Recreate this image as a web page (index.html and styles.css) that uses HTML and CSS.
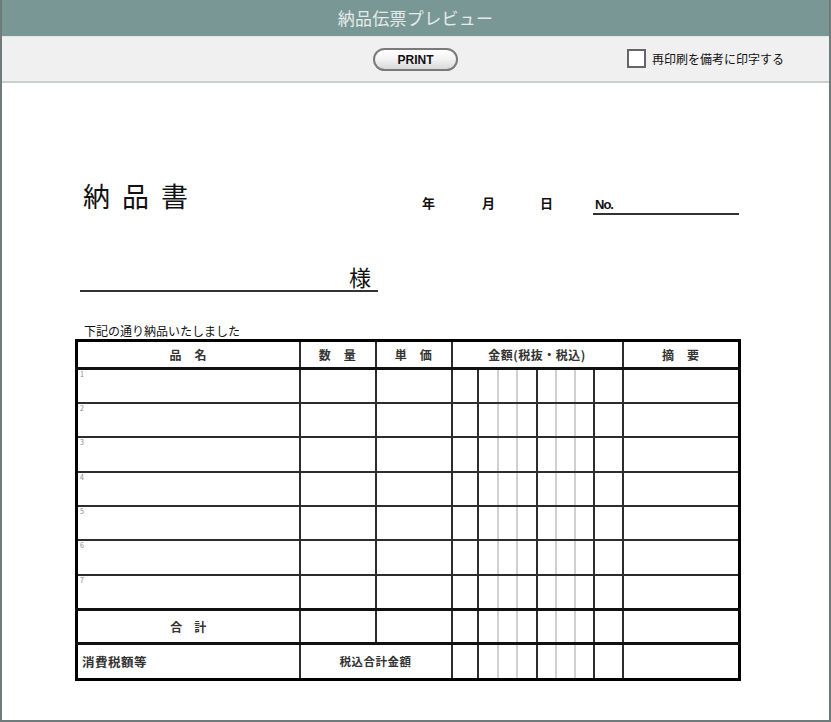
FILE: index.html
```html
<!DOCTYPE html>
<html lang="ja">
<head>
<meta charset="utf-8">
<title>納品伝票プレビュー</title>
<link rel="stylesheet" href="styles.css">
</head>
<body>
<div class="window">
  <div class="titlebar">納品伝票プレビュー</div>
  <div class="toolbar">
    <div class="tb-left"></div>
    <button class="print-btn">PRINT</button>
    <label class="reprint"><span class="checkbox"></span><span>再印刷を備考に印字する</span></label>
  </div>
  <div class="sheet">
    <div class="head-row">
      <h1 class="doc-title">納品書</h1>
      <div class="date">
        <span class="d-y">年</span><span class="d-m">月</span><span class="d-d">日</span>
      </div>
      <div class="no">No.</div>
    </div>
    <div class="customer"><span>様</span></div>
    <div class="note">下記の通り納品いたしました</div>
    <table class="slip">
      <colgroup>
        <col class="c-name"><col class="c-qty"><col class="c-price">
        <col class="c-a1"><col class="c-a2"><col class="c-a3"><col class="c-a4"><col class="c-a5"><col class="c-a6"><col class="c-a7"><col class="c-a8">
        <col class="c-memo">
      </colgroup>
      <thead>
        <tr class="hdr">
          <th>品　名</th><th>数　量</th><th>単　価</th>
          <th colspan="8">金額(税抜・税込)</th><th>摘　要</th>
        </tr>
      </thead>
      <tbody>
        <tr class="item"><td class="name"><span class="num">1</span></td><td></td><td></td><td></td><td class="lr"></td><td class="lr"></td><td></td><td class="lr"></td><td class="lr"></td><td></td><td></td><td></td></tr>
        <tr class="item"><td class="name"><span class="num">2</span></td><td></td><td></td><td></td><td class="lr"></td><td class="lr"></td><td></td><td class="lr"></td><td class="lr"></td><td></td><td></td><td></td></tr>
        <tr class="item"><td class="name"><span class="num">3</span></td><td></td><td></td><td></td><td class="lr"></td><td class="lr"></td><td></td><td class="lr"></td><td class="lr"></td><td></td><td></td><td></td></tr>
        <tr class="item"><td class="name"><span class="num">4</span></td><td></td><td></td><td></td><td class="lr"></td><td class="lr"></td><td></td><td class="lr"></td><td class="lr"></td><td></td><td></td><td></td></tr>
        <tr class="item"><td class="name"><span class="num">5</span></td><td></td><td></td><td></td><td class="lr"></td><td class="lr"></td><td></td><td class="lr"></td><td class="lr"></td><td></td><td></td><td></td></tr>
        <tr class="item"><td class="name"><span class="num">6</span></td><td></td><td></td><td></td><td class="lr"></td><td class="lr"></td><td></td><td class="lr"></td><td class="lr"></td><td></td><td></td><td></td></tr>
        <tr class="item"><td class="name"><span class="num">7</span></td><td></td><td></td><td></td><td class="lr"></td><td class="lr"></td><td></td><td class="lr"></td><td class="lr"></td><td></td><td></td><td></td></tr>
        <tr class="total"><td class="label-c">合　計</td><td></td><td></td><td></td><td class="lr"></td><td class="lr"></td><td></td><td class="lr"></td><td class="lr"></td><td></td><td></td><td></td></tr>
        <tr class="final"><td class="label-l">消費税額等</td><td colspan="2" class="label-c2">税込合計金額</td><td></td><td class="lr"></td><td class="lr"></td><td></td><td class="lr"></td><td class="lr"></td><td></td><td></td><td></td></tr>
      </tbody>
    </table>
  </div>
</div>
</body>
</html>
```

FILE: styles.css
```css
* { box-sizing: border-box; }
html, body { margin: 0; padding: 0; background: #ffffff; }
body { font-family: "Noto Sans CJK JP", "Noto Sans", sans-serif; color: #111; }

.window {
  width: 831px;
  height: 722px;
  border: 2px solid #6e7b7a;
  border-top: 0;
  background: #ffffff;
  overflow: hidden;
}

.titlebar {
  height: 36px;
  background: #799794;
  color: #e4ebea;
  font-size: 17px;
  line-height: 36px;
  text-align: center;
  letter-spacing: 0.3px;
}

.toolbar {
  height: 47px;
  background: #f0f0f0;
  border-top: 1px solid #e6e6e6;
  border-bottom: 2px solid #c9cfce;
  display: grid;
  grid-template-columns: 1fr auto 1fr;
  align-items: center;
}

.print-btn {
  width: 85px;
  height: 23px;
  border: 2px solid #7a7a7a;
  border-radius: 12px;
  background: linear-gradient(#ffffff 0%, #f4f4f4 45%, #d9d9d9 100%);
  font-family: "Liberation Sans", Arial, sans-serif;
  font-size: 12px;
  font-weight: bold;
  color: #111;
  padding: 0;
  margin-top: 1px;
}

.reprint {
  justify-self: end;
  margin-right: 45px;
  margin-top: -1px;
  display: flex;
  align-items: center;
  gap: 6px;
  font-size: 12px;
  color: #111;
}

.checkbox {
  width: 19px;
  height: 19px;
  border: 2px solid #666;
  background: #fff;
}

.sheet {
  padding: 98px 0 0 74px;
}

.head-row {
  display: flex;
  align-items: flex-end;
  height: 30px;
}

.doc-title {
  margin: 0 0 0 7px;
  font-size: 27px;
  font-weight: normal;
  letter-spacing: 12px;
  line-height: 30px;
  width: 339px;
}

.date {
  display: flex;
  font-size: 13px;
  font-weight: bold;
  line-height: 16px;
}
.d-y { width: 60px; }
.d-m { width: 58px; }
.d-d { width: 53px; }

.no {
  width: 146px;
  border-bottom: 2px solid #333;
  font-family: "Liberation Sans", Arial, sans-serif;
  font-size: 13px;
  font-weight: bold;
  letter-spacing: -1px;
  line-height: 16px;
  padding-left: 2px;
  margin-bottom: -4px;
}

.customer {
  margin-top: 51px;
  margin-left: 4px;
  width: 298px;
  border-bottom: 2px solid #333;
  text-align: right;
  font-size: 22px;
  line-height: 28px;
  padding-right: 7px;
}

.note {
  margin-top: 32px;
  margin-left: 8px;
  font-size: 12px;
  line-height: 14px;
}

.slip {
  margin-top: 1px;
  margin-left: -1px;
  border-collapse: collapse;
  table-layout: fixed;
  width: 664px;
  border: 3px solid #000;
}

.c-name { width: 223px; }
.c-qty { width: 76px; }
.c-price { width: 76px; }
.c-a1 { width: 26px; }
.c-a2 { width: 20px; }
.c-a3 { width: 19px; }
.c-a4 { width: 20px; }
.c-a5 { width: 19px; }
.c-a6 { width: 19px; }
.c-a7 { width: 19px; }
.c-a8 { width: 29px; }
.c-memo { width: 117px; }

.slip th, .slip td {
  border: 2px solid #2d2d2d;
  padding: 0;
}

.slip th {
  height: 28px;
  font-size: 12px;
  font-weight: bold;
  color: #333;
  text-align: center;
  border-bottom-width: 3px;
  border-bottom-color: #111;
  letter-spacing: 0.5px;
}

.slip .item td { height: 34.4px; vertical-align: top; }
.slip .total td { height: 34px; border-top: 3px solid #111; }
.slip .final td { height: 36px; border-top: 3px solid #111; }

.slip td.lr { border-right: 2px solid #d0d0d0; }

.num {
  display: block;
  font-size: 7px;
  line-height: 9px;
  color: #888;
  padding-left: 2px;
}

.label-c {
  text-align: center;
  font-size: 12px;
  font-weight: bold;
  color: #333;
}

.label-c2 {
  text-align: center;
  font-size: 11.5px;
  font-weight: bold;
  color: #333;
  letter-spacing: 0.5px;
}

.label-l {
  text-align: left;
  font-size: 12.5px;
  font-weight: bold;
  color: #333;
  letter-spacing: 0.5px;
  padding-left: 4px !important;
}
```
